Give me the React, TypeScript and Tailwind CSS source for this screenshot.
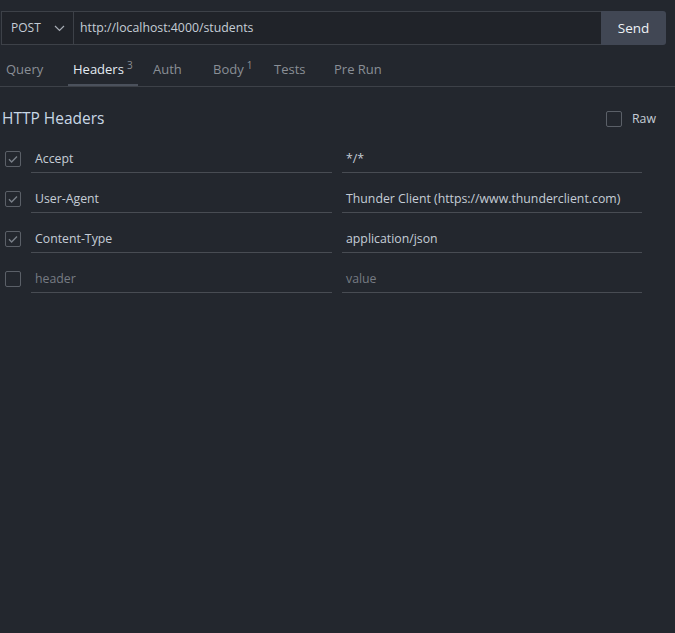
import { useState } from 'react';

type Header = { key: string; value: string; on: boolean };

const initialHeaders: Header[] = [
  { key: 'Accept', value: '*/*', on: true },
  { key: 'User-Agent', value: 'Thunder Client (https://www.thunderclient.com)', on: true },
  { key: 'Content-Type', value: 'application/json', on: true },
];

const tabs = [
  { label: 'Query', w: 'w-[67px]' },
  { label: 'Headers', sup: '3', w: 'w-[80px]' },
  { label: 'Auth', w: 'w-[60px]' },
  { label: 'Body', sup: '1', w: 'w-[61px]' },
  { label: 'Tests', w: 'w-[60px]' },
  { label: 'Pre Run', w: 'w-[80px]' },
];

function Check({ checked, onClick }: { checked: boolean; onClick?: () => void }) {
  return (
    <button
      onClick={onClick}
      className="flex h-4 w-4 shrink-0 items-center justify-center rounded-[2px] border border-[#5b6068] bg-transparent"
    >
      {checked && (
        <svg width="12" height="12" viewBox="0 0 12 12" fill="none">
          <path d="M2 6.3l2.6 2.6L10 3.4" stroke="#7a8089" strokeWidth="1.4" />
        </svg>
      )}
    </button>
  );
}

export default function App() {
  const [active, setActive] = useState('Headers');
  const [headers, setHeaders] = useState(initialHeaders);
  const [raw, setRaw] = useState(false);

  const toggle = (i: number) =>
    setHeaders(headers.map((h, j) => (j === i ? { ...h, on: !h.on } : h)));

  return (
    <div
      className="min-h-screen bg-[#23272e] text-[12.3px] text-[#c5cdd6]"
      style={{ fontFamily: '"Open Sans", "Noto Sans", sans-serif' }}
    >
      {/* request bar */}
      <div className="flex pt-[11px] pl-[1px]">
        <div className="flex h-[34px] w-[600px] border-y border-l border-[#3d4148] bg-[#202329]">
          <div className="flex w-[72px] items-center justify-between border-r border-[#3d4148] pl-[9px] pr-[8px] text-[#c5cdd6]">
            <span className="text-[12px]">POST</span>
            <svg width="11" height="7" viewBox="0 0 11 7" fill="none">
              <path d="M1 1l4.5 4.5L10 1" stroke="#a7adb5" strokeWidth="1.2" />
            </svg>
          </div>
          <div className="flex items-center pl-[6px] text-[#c5cdd6]">http://localhost:4000/students</div>
        </div>
        <button className="h-[34px] w-[65px] rounded-r-[3px] bg-[#414754] text-[13.5px] text-[#eef2f6]">Send</button>
      </div>

      {/* tabs */}
      <div className="flex h-[42px] items-end border-b border-[#3d4148] pl-[1px]">
        {tabs.map((t) => (
          <div key={t.label} className={`${t.w} flex`}>
            <button
              onClick={() => setActive(t.label)}
              className={`flex h-[40px] items-end border-b-2 px-[5px] pb-[5px] text-[13px] ${
                active === t.label ? 'border-[#4b515c] text-[#e4ebf2]' : 'border-transparent text-[#8a8f96]'
              }`}
            >
              <span>
                {t.label}
                {t.sup && <sup className="ml-[3px] text-[10px] text-[#8a8f96]">{t.sup}</sup>}
              </span>
            </button>
          </div>
        ))}
      </div>

      {/* heading */}
      <div className="mt-[14px] flex h-[36px] items-center justify-between pl-[2px] pr-[9px]">
        <h2 className="text-[15.5px] text-[#c9d8e6]">HTTP Headers</h2>
        <label className="flex items-center gap-[10px] text-[12.3px] text-[#c5cdd6]">
          <Check checked={raw} onClick={() => setRaw(!raw)} />
          <span className="w-[34px]">Raw</span>
        </label>
      </div>

      {/* rows */}
      <div className="mt-[2px] flex flex-col">
        {[...headers, { key: '', value: '', on: false }].map((h, i) => (
          <div key={i} className="flex h-[40px] items-center pl-[5px]">
            <Check checked={h.on} onClick={() => i < headers.length && toggle(i)} />
            <div className="ml-[10px] flex h-[28px] w-[301px] items-center border-b border-[#484c53] pt-[1px] pl-[4px]">
              {h.key || <span className="text-[#767b83]">header</span>}
            </div>
            <div className="ml-[10px] flex h-[28px] w-[300px] items-center border-b border-[#484c53] pt-[1px] pl-[4px]">
              {h.value || <span className="text-[#767b83]">value</span>}
            </div>
          </div>
        ))}
      </div>
    </div>
  );
}
